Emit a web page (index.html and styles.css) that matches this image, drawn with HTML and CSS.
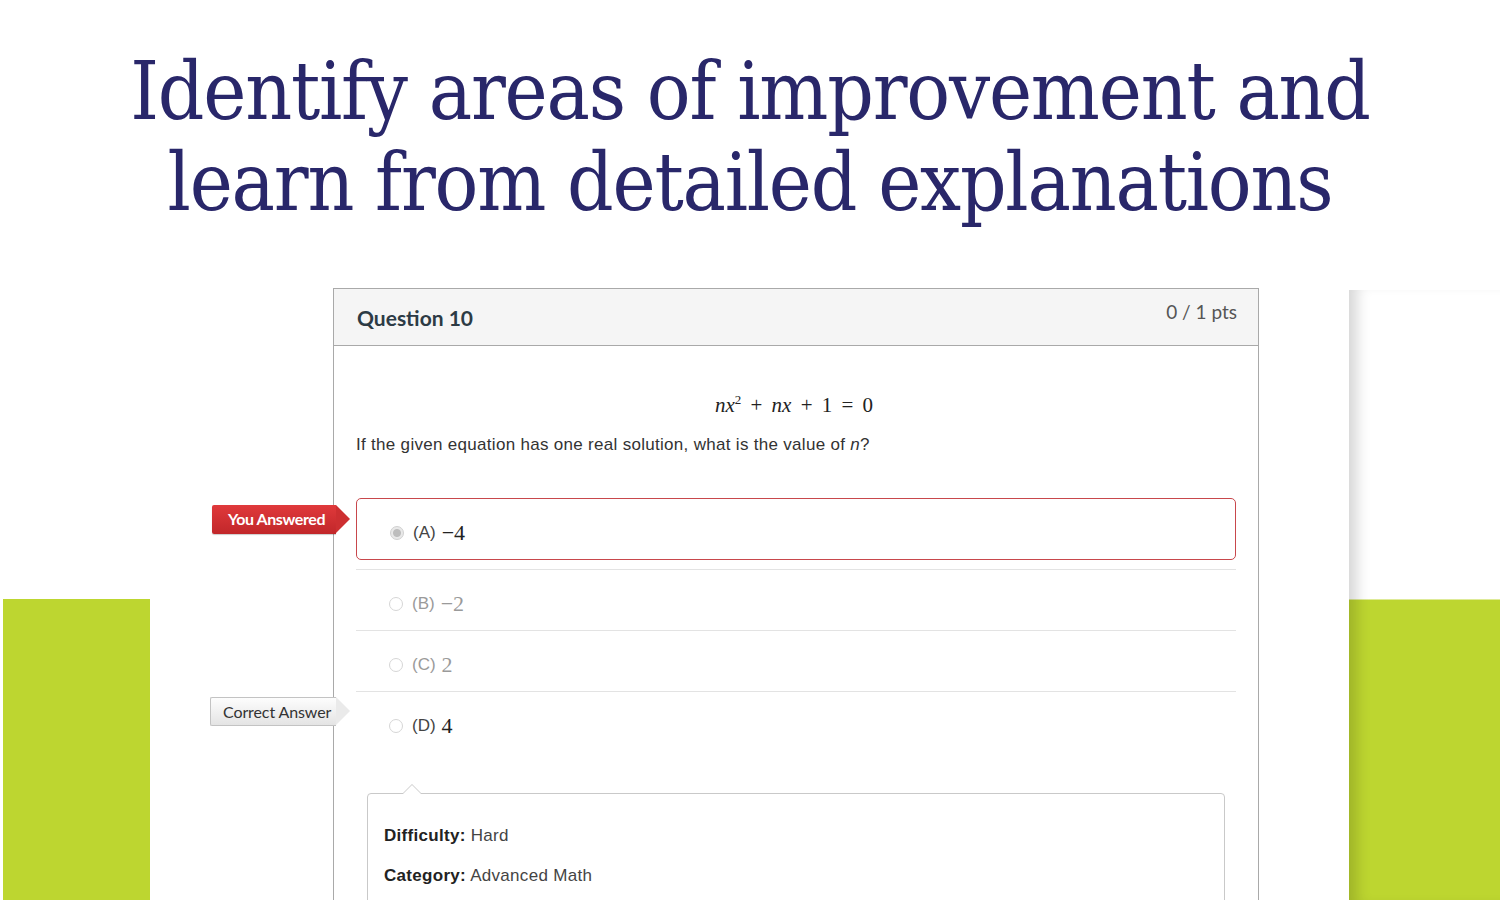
FILE: index.html
```html
<!DOCTYPE html>
<html lang="en">
<head>
  <meta charset="UTF-8" />
  <title>Review Results</title>
  <link rel="stylesheet" href="styles.css">
</head>
<body>

  <h1 class="headline">Identify areas of improvement and<br>learn from detailed explanations</h1>

  <div class="stage">
    <!-- decorative backdrop blocks -->
    <div class="deco deco-left"></div>
    <div class="deco deco-right"></div>

    <div class="question">
      <div class="question-header">
        <span class="question-name">Question 10</span>
        <span class="question-points">0 / 1 pts</span>
      </div>

      <div class="question-body">
        <div class="equation">
          <i>n</i><i>x</i><sup>2</sup> <span class="op">+</span> <i>n</i><i>x</i> <span class="op">+</span> 1 <span class="op">=</span> 0
        </div>
        <p class="question-text">If the given equation has one real solution, what is the value of <i>n</i>?</p>

        <div class="answers">
          <div class="answer answer-selected">
            <span class="tag tag-wrong">You Answered</span>
            <span class="radio radio-checked"></span>
            <span class="answer-letter">(A)</span>
            <span class="answer-math">&minus;4</span>
          </div>
          <div class="answer answer-muted">
            <span class="radio"></span>
            <span class="answer-letter">(B)</span>
            <span class="answer-math">&minus;2</span>
          </div>
          <div class="answer answer-muted">
            <span class="radio"></span>
            <span class="answer-letter">(C)</span>
            <span class="answer-math">2</span>
          </div>
          <div class="answer answer-correct">
            <span class="tag tag-correct">Correct Answer</span>
            <span class="radio"></span>
            <span class="answer-letter">(D)</span>
            <span class="answer-math">4</span>
          </div>
        </div>

        <div class="explanation">
          <p><b>Difficulty:</b> Hard</p>
          <p><b>Category:</b> Advanced Math</p>
        </div>
      </div>
    </div>
  </div>

</body>
</html>
```

FILE: styles.css
```css
:root {
  --navy: #29276a;
  --lime: #bdd630;
  --border: #a9a9a9;
  --rule: #e3e3e3;
  --text: #333;
}

html, body {
  margin: 0;
  height: 100%;
  overflow: hidden;
  background: #fff;
}

body {
  font-family: "Liberation Sans", Arial, sans-serif;
  color: var(--text);
}

.headline {
  margin: 0;
  padding-top: 46px;
  text-align: center;
  font-family: "DejaVu Serif Condensed", "DejaVu Serif", serif;
  font-weight: normal;
  font-size: 81px;
  line-height: 91px;
  color: var(--navy);
  letter-spacing: -1.2px;
}

/* area holding the quiz card */
.stage {
  position: relative;
  margin-top: 60px;
  height: 612px;
}

.deco {
  position: absolute;
  bottom: 0;
}
.deco-left {
  left: 3px;
  width: 147px;
  height: 301px;
  background: var(--lime);
}
.deco-right {
  left: 1349px;
  right: 0;
  top: 2px;
  background: linear-gradient(#fff 0, #fff 309px, var(--lime) 310px);
  box-shadow: inset 16px 0 14px -8px rgba(0, 0, 0, 0.16);
}

.question {
  position: relative;
  width: 924px;
  margin-left: 333px;
  border: 1px solid var(--border);
  background: #fff;
  height: 700px;
}

.question-header {
  display: flex;
  justify-content: space-between;
  align-items: flex-start;
  height: 56px;
  padding: 0 21px 0 23px;
  background: #f5f5f5;
  border-bottom: 1px solid var(--border);
  font-family: Lato, "Open Sans", sans-serif;
}
.question-name {
  margin-top: 16px;
  font-size: 21px;
  font-weight: bold;
  color: #2d3b45;
}
.question-points {
  margin-top: 11px;
  font-size: 19px;
  color: #555;
}

.question-body {
  padding: 0 22px 0 22px;
}

.equation {
  margin-top: 46px;
  text-align: center;
  font-family: "Liberation Serif", "DejaVu Serif", serif;
  font-size: 21px;
  color: #222;
  padding-right: 4px;
  word-spacing: 2px;
}
.equation i {
  font-style: italic;
}
.equation sup {
  font-size: 13px;
}
.equation .op {
  padding: 0 2px;
}

.question-text {
  margin: 17px 0 0;
  font-size: 17px;
  letter-spacing: 0.3px;
  color: #333;
}

.answers {
  margin-top: 43px;
}

.answer {
  position: relative;
  display: flex;
  align-items: center;
  padding-left: 33px;
  padding-top: 7px;
  height: 53px;
  border-top: 1px solid var(--rule);
  font-size: 17px;
}
.answer-selected {
  border: 1px solid #c8474c;
  border-radius: 5px;
  margin-bottom: 9px;
}

.answer-letter {
  margin-left: 9px;
  color: #444;
}
.answer-math {
  margin-left: 6px;
  font-family: "Liberation Serif", "DejaVu Serif", serif;
  font-size: 22px;
  color: #222;
}
.answer-muted .answer-letter,
.answer-muted .answer-math {
  color: #9a9a9a;
}

.radio {
  width: 14px;
  height: 14px;
  border: 1px solid #d6d6d6;
  border-radius: 50%;
  background: #fff;
  box-sizing: border-box;
  flex: none;
}
.radio-checked {
  background: radial-gradient(circle, #bdbdbd 0, #bdbdbd 3.5px, #e9e9e9 4.5px);
  border-color: #d0d0d0;
}

/* flag labels sitting left of the card */
.tag {
  position: absolute;
  top: 6px;
  left: -145px;
  height: 29px;
  line-height: 28px;
  width: 124px;
  padding-left: 16px;
  font-family: Lato, "Open Sans", sans-serif;
  font-size: 16px;
  box-sizing: border-box;
  border-radius: 2px 0 0 2px;
}
.tag::after {
  content: "";
  position: absolute;
  top: 0;
  right: -14px;
  border-style: solid;
  border-width: 14.5px 0 14.5px 14px;
}
.tag-wrong {
  background: linear-gradient(#e0393b, #c1272a);
  color: #fff;
  font-weight: bold;
  letter-spacing: -0.4px;
  box-shadow: 0 1px 1px rgba(0, 0, 0, 0.2);
}
.tag-wrong::after {
  border-color: transparent transparent transparent #cd2f31;
}
.tag-correct {
  top: 5px;
  left: -146px;
  width: 126px;
  padding-left: 12px;
  background: linear-gradient(#fdfdfd, #e4e4e4);
  border: 1px solid #c3c3c3;
  border-right: none;
  color: #333;
  letter-spacing: -0.1px;
}
.tag-correct::after {
  top: -1px;
  border-color: transparent transparent transparent #eaeaea;
}

.explanation {
  position: relative;
  margin: 41px 11px 0 11px;
  padding: 32px 16px 20px;
  border: 1px solid #c9c9c9;
  border-radius: 4px;
  font-size: 17px;
  color: #444;
  height: 200px;
}
.explanation::before,
.explanation::after {
  content: "";
  position: absolute;
  left: 34px;
  border-style: solid;
  border-color: transparent;
}
.explanation::before {
  top: -10px;
  border-width: 0 10px 10px 10px;
  border-bottom-color: #c9c9c9;
}
.explanation::after {
  top: -9px;
  left: 35px;
  border-width: 0 9px 9px 9px;
  border-bottom-color: #fff;
}
.explanation p {
  margin: 0 0 20px;
  letter-spacing: 0.3px;
}
.explanation b {
  color: #222;
}
```
